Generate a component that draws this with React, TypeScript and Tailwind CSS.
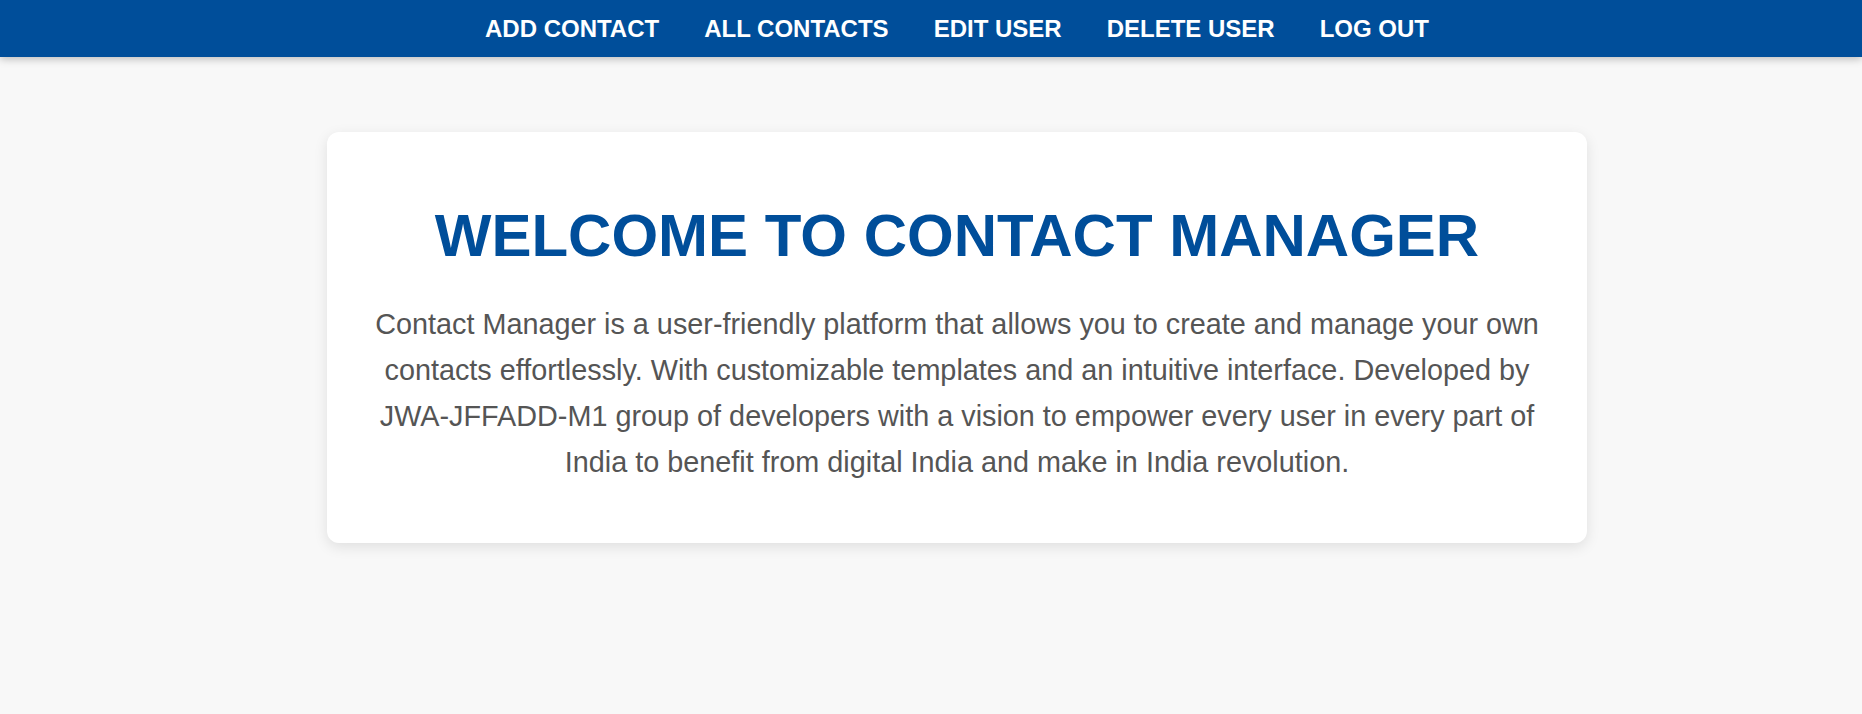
const links = ["ADD CONTACT", "ALL CONTACTS", "EDIT USER", "DELETE USER", "LOG OUT"];

function NavBar() {
  return (
    <nav className="h-[57px] w-full bg-[#004e9a] shadow-[0_2px_8px_rgba(0,0,0,0.25)]">
      <ul className="flex h-full items-center justify-center gap-[45px] pl-[52px]">
        {links.map((l) => (
          <li key={l}>
            <a href="#" className="text-[24px] font-bold text-white">
              {l}
            </a>
          </li>
        ))}
      </ul>
    </nav>
  );
}

export default function App() {
  return (
    <div className="min-h-[714px] bg-[#f8f8f8] font-['Liberation_Sans',Arial,sans-serif]">
      <NavBar />
      <main className="flex justify-center pl-[52px] pt-[75px]">
        <div className="w-[1260px] rounded-xl bg-white px-[36px] pt-[70px] pb-[58px] text-center shadow-[0_4px_14px_rgba(0,0,0,0.1)]">
          <h1 className="text-[60px] font-bold leading-[67px] text-[#004e9a]">
            WELCOME TO CONTACT MANAGER
          </h1>
          <p className="mt-[32px] text-[28.8px] leading-[46px] text-[#555555]">
            Contact Manager is a user-friendly platform that allows you to create and manage your own
            contacts effortlessly. With customizable templates and an intuitive interface. Developed by
            JWA-JFFADD-M1 group of developers with a vision to empower every user in every part of
            India to benefit from digital India and make in India revolution.
          </p>
        </div>
      </main>
    </div>
  );
}
